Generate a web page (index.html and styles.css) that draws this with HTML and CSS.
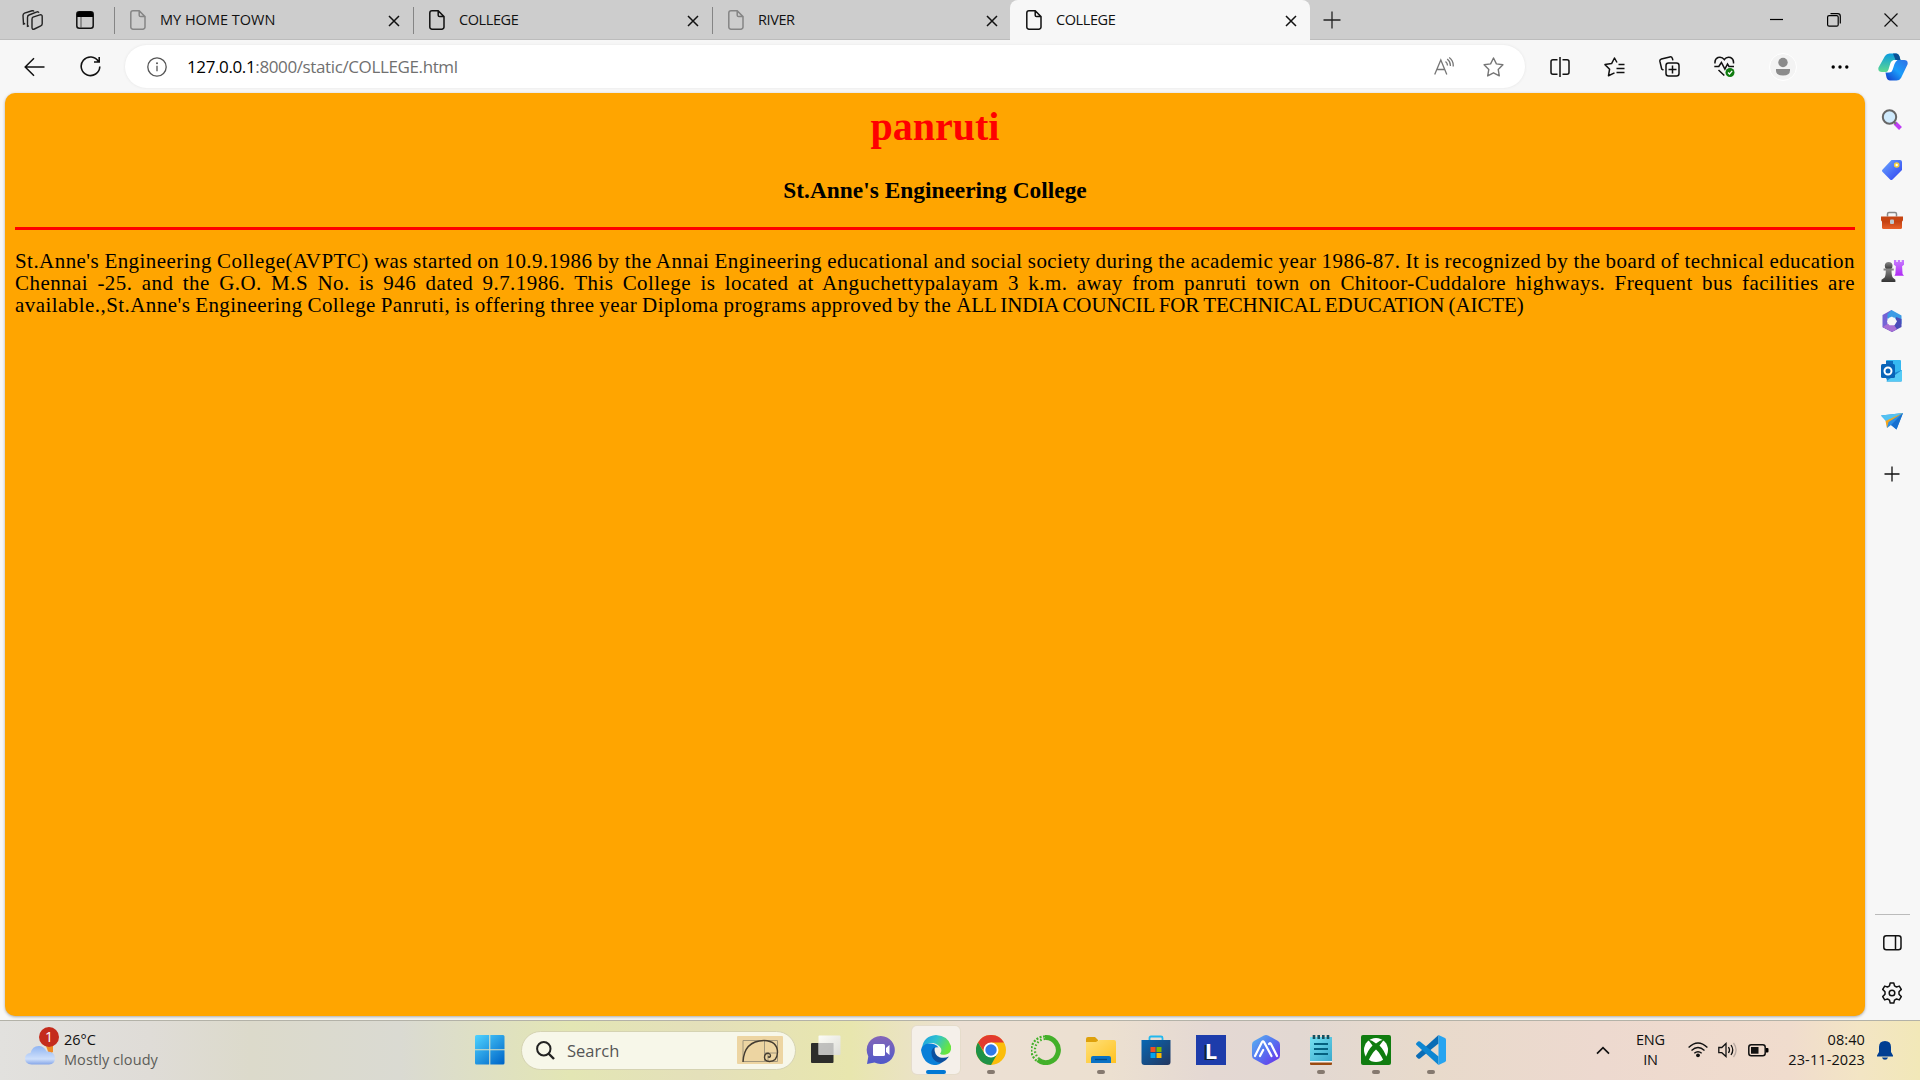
FILE: index.html
```html
<!DOCTYPE html>
<html lang="en">
<head>
<meta charset="utf-8">
<title>COLLEGE</title>
<link rel="stylesheet" href="styles.css">
</head>
<body>
<svg class="defs" width="0" height="0" aria-hidden="true">
  <defs>
    <symbol id="file" viewBox="0 0 16 20"><path d="M3 .8h6.2L15 6.6V17a2.2 2.2 0 0 1-2.2 2.2H3A2.2 2.2 0 0 1 .8 17V3A2.2 2.2 0 0 1 3 .8zM9.2 1v4.2a1.4 1.4 0 0 0 1.4 1.4H15" fill="none" stroke="currentColor" stroke-width="1.5"/></symbol>
    <symbol id="x" viewBox="0 0 12 12"><path d="M1 1l10 10M11 1L1 11" fill="none" stroke="currentColor" stroke-width="1.5"/></symbol>
    <linearGradient id="gWin" gradientUnits="userSpaceOnUse" x1="0" y1="0" x2="26" y2="30"><stop offset="0" stop-color="#4fd3ff"/><stop offset="1" stop-color="#0067c9"/></linearGradient>
    <linearGradient id="gCop1" x1="0" y1="0" x2="0" y2="1"><stop offset="0" stop-color="#0a9be0"/><stop offset="1" stop-color="#5fd98f"/></linearGradient>
    <linearGradient id="gCop2" x1="1" y1="0" x2="0" y2="1"><stop offset="0" stop-color="#2f6fe4"/><stop offset=".5" stop-color="#1a9dfa"/><stop offset="1" stop-color="#1238c8"/></linearGradient>
    <linearGradient id="gTag" x1="0" y1="0" x2="1" y2="1"><stop offset="0" stop-color="#6aa8ff"/><stop offset="1" stop-color="#2f3ff0"/></linearGradient>
    <linearGradient id="gPurple" x1="0" y1="0" x2="0" y2="1"><stop offset="0" stop-color="#c77dff"/><stop offset="1" stop-color="#b02af5"/></linearGradient>
    <linearGradient id="gPawn" x1="0" y1="0" x2="0" y2="1"><stop offset="0" stop-color="#8a8a8a"/><stop offset="1" stop-color="#333"/></linearGradient>
    <linearGradient id="gBox" x1="0" y1="0" x2="0" y2="1"><stop offset="0" stop-color="#b8380c"/><stop offset="1" stop-color="#e8622a"/></linearGradient>
    <linearGradient id="gCloud" x1="0" y1="0" x2="0" y2="1"><stop offset="0" stop-color="#8fb4f2"/><stop offset=".7" stop-color="#cfe0fb"/><stop offset="1" stop-color="#86a6e8"/></linearGradient>
    <linearGradient id="gChat" x1="0" y1="0" x2="0" y2="1"><stop offset="0" stop-color="#8466b8"/><stop offset="1" stop-color="#5059c9"/></linearGradient>
    <linearGradient id="gEdge" x1="0" y1="0" x2="1" y2=".4"><stop offset="0" stop-color="#1b9de2"/><stop offset=".5" stop-color="#2fc1d0"/><stop offset="1" stop-color="#67e540"/></linearGradient>
    <linearGradient id="gStore" x1="0" y1="0" x2="1" y2="1"><stop offset="0" stop-color="#0768b4"/><stop offset="1" stop-color="#24365f"/></linearGradient>
    <linearGradient id="gHex" x1="0" y1="0" x2="1" y2="1"><stop offset="0" stop-color="#58b6f0"/><stop offset=".5" stop-color="#5672f0"/><stop offset="1" stop-color="#6c2be8"/></linearGradient>
    <linearGradient id="gFold" x1="0" y1="0" x2="1" y2="1"><stop offset="0" stop-color="#ffe07a"/><stop offset="1" stop-color="#ffc220"/></linearGradient>
    <linearGradient id="gNote" x1="0" y1="0" x2="1" y2="1"><stop offset="0" stop-color="#76e1f2"/><stop offset="1" stop-color="#3aa9cc"/></linearGradient>
    <linearGradient id="gSq" x1="0" y1="0" x2="1" y2="1"><stop offset="0" stop-color="#fff"/><stop offset="1" stop-color="#dcdcdc"/></linearGradient>
  </defs>
</svg>

<header class="titlebar">
  <div class="slot workspaces"><svg width="21" height="20" viewBox="0 0 21 20" fill="none" stroke="#222" stroke-width="1.4"><path d="M11 7.2l6.8-2.3q2.4-.6 2.4 1.6v7.3q0 1.5-1.4 2l-6.4 3.2q-2.4 1-2.4-1.4V9.2q0-1.5 1-2zM7 15.8l-1.5.5V7.5Q5.5 5.5 7 5l8-3.2M3.2 13.5L1.5 14 1 5.5Q1 3.8 2.5 3.2L10 .8q1.5-.3 2 .7M15 1.8q1.4-.4 1.9 1"/></svg></div>
  <div class="slot tabactions"><svg width="18" height="18" viewBox="0 0 18 18"><rect x=".8" y=".8" width="16.4" height="16.4" rx="2.5" fill="none" stroke="#111" stroke-width="1.5"/><path d="M1 6V3q0-2.300 2.300-2.300h11.400Q17 .7 17 3v3z" fill="#000"/><path d="M5 6v11" stroke="#555"/></svg></div>
  <div class="tab faded"><svg class="doc"><use href="#file"/></svg><span class="label wide">MY HOME TOWN</span><svg class="close"><use href="#x"/></svg></div>
  <div class="tab"><svg class="doc"><use href="#file"/></svg><span class="label">COLLEGE</span><svg class="close"><use href="#x"/></svg></div>
  <div class="tab faded"><svg class="doc"><use href="#file"/></svg><span class="label">RIVER</span><svg class="close"><use href="#x"/></svg></div>
  <div class="tab active"><svg class="doc"><use href="#file"/></svg><span class="label">COLLEGE</span><svg class="close"><use href="#x"/></svg></div>
  <div class="slot newtab"><svg width="18" height="18" viewBox="0 0 18 18"><path d="M9 .5v17M.5 9h17" stroke="#222" stroke-width="1.3"/></svg></div>
  <div class="winbuttons">
    <svg width="14" height="14" viewBox="0 0 14 14"><path d="M0 6.500h13" stroke="#000" stroke-width="1.2"/></svg>
    <svg width="14" height="14" viewBox="0 0 14 14" fill="none" stroke="#000" stroke-width="1.2"><rect x=".6" y="2.6" width="10.6" height="10.6" rx="1.5"/><path d="M3.5.6h7.200q2.600 0 2.600 2.600v7.200"/></svg>
    <svg width="14" height="14" viewBox="0 0 14 14"><path d="M.5.5l13 13M13.5.5l-13 13" stroke="#111" stroke-width="1.2"/></svg>
  </div>
</header>

<nav class="toolbar">
  <div class="slot back"><svg width="21" height="20" viewBox="0 0 21 20"><path d="M10 1.200L1.200 10l8.800 8.800M1.200 10H20.500" fill="none" stroke="#111" stroke-width="1.5"/></svg></div>
  <div class="slot reload"><svg width="21" height="21" viewBox="0 0 21 21"><path d="M18.500 5.500A9.300 9.300 0 1 0 19.800 10.500M19.200 1v5h-5.200" fill="none" stroke="#111" stroke-width="1.6"/></svg></div>
  <div class="address">
    <svg width="20" height="20" viewBox="0 0 20 20"><circle cx="10" cy="10" r="9.2" fill="none" stroke="#555" stroke-width="1.3"/><path d="M10 8.800v5.400" stroke="#555" stroke-width="1.3"/><circle cx="10" cy="6.2" r="1" fill="#555"/></svg>
    <span class="url"><b>127.0.0.1</b>:8000/static/COLLEGE.html</span>
    <svg class="aloud" width="20" height="19" viewBox="0 0 20 19" fill="none" stroke="#767676" stroke-width="1.3"><path d="M.7 17.500L6.800 3l6 14.500M2.700 12.500h8.200M11.500 4.500q2 1.600 2 4M13.200 2q3.400 2.600 3.200 7M15.200.6Q19.700 4 19.200 9.500"/></svg>
    <svg width="21" height="20" viewBox="0 0 21 20"><path d="M10.500 1l2.900 5.900 6.500.9-4.700 4.600 1.100 6.500-5.800-3.100-5.800 3.100 1.100-6.500L1.100 7.800l6.500-.9z" fill="none" stroke="#767676" stroke-width="1.4" stroke-linejoin="round"/></svg>
  </div>
  <div class="tools">
    <div class="slot tool"><svg width="20" height="20" viewBox="0 0 20 20" fill="none" stroke="#111" stroke-width="1.5"><path d="M7.500 2.700H3Q1 2.700 1 4.700v10.600q0 2 2 2h4.500M12.500 2.700H17q2 0 2 2v10.600q0 2-2 2h-4.500M10 0v20"/></svg></div>
    <div class="slot tool"><svg width="21" height="20" viewBox="0 0 21 20" fill="none" stroke="#111" stroke-width="1.5" stroke-linejoin="round"><path d="M13 5.500L10.500 1 7.600 6.600 1 7.600l4.600 4.600-1.100 6.500L10.500 15.900M14.500 7.500H20.500M12.500 11.500h8M12.500 15.500h8"/></svg></div>
    <div class="slot tool"><svg width="21" height="21" viewBox="0 0 21 21" fill="none" stroke="#111" stroke-width="1.5"><rect x="7" y="7" width="13" height="13" rx="2.5"/><path d="M13.500 9.500v8M9.500 13.500h8M4.500 14.200L2.700 13 .9 5.400Q.5 3.500 2.400 3L10.800.9q2-.3 2.600 1.500l.5 2"/></svg></div>
    <div class="slot tool"><svg width="21" height="21" viewBox="0 0 21 21" fill="none" stroke="#111" stroke-width="1.5"><path d="M1 7.500Q.5 3 4 1.500 8 .3 10.300 3.600 12.500.3 16.500 1.500 20 3 19.500 7.500M.3 10.500h4.500l2.600-4 3.500 6.700L13.500 8l1.500 2.500h5M4.500 14l5.800 5.500"/><circle cx="16" cy="16.5" r="4.5" fill="#107c10" stroke="none"/><path d="M14 16.500l1.500 1.500 2.700-3.200" stroke="#fff" stroke-width="1.2"/></svg></div>
  </div>
  <div class="slot profile"><svg width="28" height="28" viewBox="0 0 28 28"><circle cx="14" cy="14" r="13.5" fill="#f3f3f3" stroke="#fff"/><circle cx="14" cy="9.5" r="4.7" fill="#8b8b8b"/><path d="M7 16h14v1.500q0 5-7 5t-7-5z" fill="#8b8b8b"/></svg></div>
  <div class="slot more"><svg width="18" height="4" viewBox="0 0 18 4"><circle cx="2.2" cy="2" r="1.7"/><circle cx="9" cy="2" r="1.7"/><circle cx="15.8" cy="2" r="1.7"/></svg></div>
  <div class="slot copilot"><svg width="30" height="28" viewBox="0 0 30 28"><path d="M7 3Q8.500.5 11.500.5H18q2.500 0 3.500 3l1 3.500h-5q-3 0-4 3l-2 6q-1 3-4 3H4q-4.500 0-3.500-4.500z" fill="url(#gCop1)"/><path d="M15 .5h3q2.500 0 3.500 3l1 3.500h-5z" fill="#0a4f94"/><path d="M23 25q-1.500 2.500-4.500 2.500H12q-2.500 0-3.500-3l-1-5q3.500 0 4.500-3l2.500-7q1-2.500 4-2.500H26q4.500 0 3.500 4.500z" fill="url(#gCop2)"/><path d="M12.300 10.500q1-3.500 4.700-3.500h2.500q-2 1.500-3 4l-2 6q-.7 2.500-3.500 2.500H7.500q2.500-.5 3-3z" fill="#fff"/></svg></div>
</nav>

<main class="workarea">
  <article class="page">
    <h1>panruti</h1>
    <h3>St.Anne's Engineering College</h3>
    <hr>
    <p>
      <span class="line full">St.Anne's Engineering College(AVPTC) was started on 10.9.1986 by the Annai Engineering educational and social society during the academic year 1986-87. It is recognized by the board of technical education</span>
      <span class="line full">Chennai -25. and the G.O. M.S No. is 946 dated 9.7.1986. This College is located at Anguchettypalayam 3 k.m. away from panruti town on Chitoor-Cuddalore highways. Frequent bus facilities are</span>
      <span class="line">available.,St.Anne's Engineering College Panruti, is offering three year Diploma programs approved by the <span class="caps">ALL INDIA COUNCIL FOR TECHNICAL EDUCATION (AICTE)</span></span>
    </p>
  </article>
  <aside class="sidebar">
    <div class="app"><svg width="22" height="22" viewBox="0 0 22 22"><path d="M14 14l5.500 5.500" stroke="#bf3df5" stroke-width="4"/><path d="M12.500 12.500l2.500 2.500" stroke="#777" stroke-width="2"/><circle cx="8.500" cy="8" r="6.700" fill="#cfeafc" stroke="#666" stroke-width="2"/></svg></div>
    <div class="app"><svg width="22" height="22" viewBox="0 0 22 22"><path d="M10.500 1h8.500q2 0 2 2v8L11.500 20.500q-1.200 1-2.400 0L1.400 12.800q-1-1 0-2z" fill="url(#gTag)"/><circle cx="15.700" cy="6" r="2" fill="#fff" stroke="#f5cf3c" stroke-width="1.6"/></svg></div>
    <div class="app"><svg width="22" height="20" viewBox="0 0 22 20"><path d="M6.500 6.500V4q0-1.500 1.500-1.500h6q1.500 0 1.500 1.500v2.500" fill="none" stroke="#888" stroke-width="1.5"/><rect x="1" y="9" width="20" height="10" rx="1.5" fill="url(#gBox)"/><path d="M0 6.500h22v3.500q0 1.500-2 1.500H2q-2 0-2-1.500z" fill="#c74512"/><rect x="9" y="9.500" width="4" height="4.500" rx="1" fill="#bdc9cf"/></svg></div>
    <div class="app"><svg width="23" height="24" viewBox="0 0 24 24"><path d="M13.500.5h2.500v2h1.500v-2h2.500v2h1.500v-2H24v5l-2 1.500.5 8 1.500 2H14l1-2 .5-8-2-1.500z" fill="url(#gPurple)"/><circle cx="8" cy="6.500" r="4" fill="url(#gPawn)"/><path d="M2.700 9.500h10.600v2H11q0 6 1.500 7.500l2.500 2v2.500H.5V21L3.500 19Q5 17.500 5 11.500H2.700z" fill="url(#gPawn)"/></svg></div>
    <div class="app"><svg width="22" height="22" viewBox="0 0 22 22"><path d="M10.500 0L1.500 5v12l5 2.500V8l7-4z" fill="#7563d5"/><path d="M10.500 0L20.500 5.500V14L15 11 11 6.500 6.500 9V4z" fill="#3b9be5"/><path d="M20.500 9v8L11 22 1.500 17l5-1 8.500-4V7z" fill="#4a4bb8"/><path d="M1.500 17L11 22l5-2.700-3-4.300-6.500-1z" fill="#a86fd4"/><path d="M8.500 7.500h5l2.500 3.800-2.500 4h-5L6 11.500z" fill="#f7f7f7"/></svg></div>
    <div class="app"><svg width="22" height="22" viewBox="0 0 22 22"><rect x="5" y="0" width="15" height="19" rx="1" fill="#35b8f1"/><path d="M5 1h7v6H5z" fill="#0f6cbd"/><path d="M21 10v10q0 1.500-1.500 1.500H6L5 16z" fill="#1a86d0"/><path d="M5 21.500L21 10v10.500q0 1-1 1z" fill="#54cbf6"/><rect x="0" y="4" width="14" height="14" rx="1.5" fill="#0864b8"/><circle cx="7" cy="11" r="3.500" fill="none" stroke="#fff" stroke-width="2"/></svg></div>
    <div class="app"><svg width="22" height="18" viewBox="0 0 22 18"><path d="M0 3.500L22 1 15.500 17.500 10 13 6 16 5.500 9.500z" fill="#2c8fe4"/><path d="M0 3.500L22 1 5.500 9.500z" fill="#53c2f2"/><path d="M22 1L7.500 10 6 16 4.500 9z" fill="#f4a51c"/><path d="M10 13L22 1 15.500 17.500z" fill="#1670d0"/></svg></div>
    <div class="app add"><svg width="16" height="16" viewBox="0 0 16 16"><path d="M8 .5v15M.5 8h15" stroke="#111" stroke-width="1.3"/></svg></div>
    <div class="tail">
      <div class="app"><svg width="19" height="16" viewBox="0 0 19 16" fill="none" stroke="#111" stroke-width="1.5"><rect x=".8" y=".8" width="17.2" height="14" rx="2.5"/><path d="M12.500 1v14"/></svg></div>
      <div class="app"><svg width="22" height="22" viewBox="0 0 22 22" fill="none" stroke="#111" stroke-width="1.5" stroke-linejoin="round"><circle cx="11" cy="11" r="2.8"/><path d="M9.200 1h3.600l.7 2.900 2 1.100 2.800-.9 2 3.300L18 9.700v2.600l2.300 2.300-2 3.300-2.800-.9-2 1.100-.7 2.900H9.200l-.7-2.900-2-1.100-2.800.9-2-3.300L4 12.300V9.700L1.700 7.400l2-3.300 2.800.9 2-1.100z"/></svg></div>
    </div>
  </aside>
</main>

<footer class="taskbar">
  <div class="weather">
    <div class="cloud"><svg width="32" height="32" viewBox="0 0 32 32"><path d="M22 12h7v6l-4 2z" fill="#f08a24"/><path d="M7.500 30.500Q1 30 1 24.500 1 19.500 6.500 19 8.500 11.500 15.500 12q5 .5 7 5.500 8-.5 8.500 6.500 0 6-6 6.500z" fill="url(#gCloud)"/></svg><span class="count">1</span></div>
    <div class="forecast"><span>26°C</span><span class="cond">Mostly cloudy</span></div>
  </div>
  <div class="apps">
    <div class="task start"><svg width="30" height="30" viewBox="0 0 30 30"><path d="M1.500 0H14.200v14.200H0V1.500Q0 0 1.500 0zM15.300 0H28q1.500 0 1.500 1.500v12.700H15.300zM0 15.300h14.200V29.500H1.500Q0 29.500 0 28zM15.300 15.300h14.200V28q0 1.500-1.500 1.500H15.300z" fill="url(#gWin)"/></svg></div>
    <div class="search">
      <svg width="19" height="19" viewBox="0 0 19 19" fill="none" stroke="#222" stroke-width="2"><circle cx="7.800" cy="7.800" r="6.700"/><path d="M12.500 12.500l5.500 5.500" stroke-width="2.4"/></svg>
      <span class="hint">Search</span>
      <svg width="46" height="28" viewBox="0 0 46 28" fill="none"><rect width="46" height="28" rx="1" fill="#edd5a2"/><path d="M6 4.500h34.500V25.500H6zM27.500 4.500v21M27.500 17h13M31 17v8" stroke="#a2977c"/><path d="M6 26Q7 5 27 4.500 40.500 5 40.500 16.500 40 25.500 32.500 25.500 27.500 25 27.500 21.500 27.500 17 31.500 17.300 34 18 33.300 20.500 32.300 22 31 20.500" stroke="#443c31" stroke-width="1.4"/></svg>
    </div>
    <div class="task"><svg width="30" height="30" viewBox="0 0 30 30"><rect x="0" y="8" width="22.500" height="20" rx="1" fill="#2d2d2b"/><rect x="7.500" y=".5" width="22" height="19.500" rx="1" fill="url(#gSq)" opacity=".9"/><path d="M7.500 8h15v12h-15z" fill="#b5b5b3" opacity=".75"/></svg></div>
    <div class="task"><svg width="30" height="30" viewBox="0 0 30 30"><path d="M15 1a14 14 0 1 1-6.500 26.500L1 29l1.300-7.500A14 14 0 0 1 15 1z" fill="url(#gChat)"/><rect x="7" y="9" width="12" height="12" rx="1.5" fill="#fff"/><path d="M20 13l3.500-3v10L20 17z" fill="#fff"/></svg></div>
    <div class="task current"><svg width="30" height="30" viewBox="0 0 30 30"><path d="M1 13Q2.500 1 15 0q12 .5 15 11 1 7-5 8.500-5 1-6-1 2-2 1-5Q17.500 9 12 8 5 8 1 13z" fill="url(#gEdge)"/><path d="M0 15Q1 9 8 8.500q7 0 9.500 4-5-1-5.500 5 .5 7.500 9 10Q17 30.500 13 30 2 28.500 0 15z" fill="#0a7fd8"/><path d="M13.500 12Q9 15 11 21.500 14 28.500 21 27.500q4-1.500 7-6-4 2-9 1-6-2-5.500-10.500z" fill="#0c4f9e"/></svg><i class="mark"></i></div>
    <div class="task"><svg width="30" height="30" viewBox="0 0 30 30"><circle cx="15" cy="15" r="15" fill="#fbbd0a"/><path d="M2 7.500A15 15 0 0 1 28 7.500H15L9 18z" fill="#e23a2e"/><path d="M2 7.500A15 15 0 0 0 15 30L21.500 18.500H8.500z" fill="#1f9247"/><circle cx="15" cy="15" r="7.500" fill="#fff"/><circle cx="15" cy="15" r="5.700" fill="#3079e8"/></svg><i class="mark"></i></div>
    <div class="task"><svg width="30" height="30" viewBox="0 0 30 30" fill="none" stroke="#43b02a"><path d="M14 2.600A12.500 12.500 0 1 1 7 24.800" stroke-width="5"/><path d="M14 1.500A13.500 13.500 0 0 0 6 26" stroke-width="2.2" stroke-dasharray="2 1.5"/><path d="M14 4A11 11 0 0 0 8 23.500" stroke-width="2.2" stroke-dasharray="1.5 2"/></svg></div>
    <div class="task"><svg width="30" height="30" viewBox="0 0 30 30"><path d="M0 4q0-2 2-2h7l3 3v4H0z" fill="#dea10b"/><path d="M0 7h10l3-2h15q2 0 2 2v21H0z" fill="url(#gFold)"/><path d="M5 28v-5q0-2 2-2h16q2 0 2 2v5z" fill="#0b72c4"/><path d="M9 24.500h12" stroke="#064a87" stroke-width="1.3"/></svg><i class="mark"></i></div>
    <div class="task"><svg width="30" height="30" viewBox="0 0 30 30"><path d="M8.500 6V3q0-1.500 1.500-1.500h10q1.500 0 1.500 1.500v3" fill="none" stroke="#22b8ee" stroke-width="1.8"/><path d="M.5 5h29v22q0 3-3 3H3.500q-3 0-3-3z" fill="url(#gStore)"/><path d="M9.500 12h5v5h-5z" fill="#f25022"/><path d="M15.500 12h5v5h-5z" fill="#7fba00"/><path d="M9.500 18h5v5h-5z" fill="#00a4ef"/><path d="M15.500 18h5v5h-5z" fill="#ffb900"/></svg></div>
    <div class="task"><span class="ell">L</span></div>
    <div class="task"><svg width="30" height="30" viewBox="0 0 30 30"><path d="M12.500.7q2.500-1.300 5 0L27 6q2 1.200 2 3.500v11q0 2.300-2 3.500l-9.500 5.300q-2.500 1.300-5 0L3 24q-2-1.200-2-3.500v-11Q1 7.200 3 6z" fill="url(#gHex)"/><path d="M4 21l7-14q1-1.500 2 0l7.500 14M9 21l3.200-6M18 9q1-2 2 0l6 12" fill="none" stroke="#fff" stroke-width="2.2" stroke-linecap="round"/></svg></div>
    <div class="task"><svg width="22" height="30" viewBox="0 0 22 30"><rect y="26" width="22" height="4" rx="1" fill="#9a4a10"/><path d="M0 2h22v24H0z" fill="url(#gNote)"/><path d="M0 26h22v1.500H0z" fill="#f5f5f5"/><path d="M4 9h14M4 14h14M4 19h14" stroke="#04607f" stroke-width="1.8"/><path d="M4 0v4M8.700 0v4M13.300 0v4M18 0v4" stroke="#15505f" stroke-width="2.6"/></svg><i class="mark"></i></div>
    <div class="task"><svg width="30" height="30" viewBox="0 0 30 30"><rect width="30" height="30" rx="2" fill="#107c10"/><circle cx="15" cy="15" r="12" fill="#fff"/><path d="M7 4.500Q11 5 15 8.500 19 5 23 4.500L18.500 10.500Q24 16 25.500 23L22.500 25.500Q19 18 15 14.500 11 18 7.500 25.500L4.500 23Q6 16 11.500 10.500z" fill="#107c10"/></svg><i class="mark"></i></div>
    <div class="task"><svg width="30" height="30" viewBox="0 0 30 30"><path d="M22.500 0v8.500L4 23.500q-1 .7-2 0L.5 22q-1-1 0-2z" fill="#0a6cb5"/><path d="M22.500 30v-8.500L4 6.500q-1-.7-2 0L.5 8q-1 1 0 2z" fill="#0d86d2"/><path d="M22.500 0L29 3q1 .6 1 1.800v20.400q0 1.200-1 1.800l-6.500 3z" fill="#27a4f0"/></svg><i class="mark"></i></div>
  </div>
  <div class="tray">
    <svg width="14" height="9" viewBox="0 0 14 9"><path d="M1 7.700l6-6 6 6" fill="none" stroke="#111" stroke-width="1.7"/></svg>
    <div class="lang"><span>ENG</span><span>IN</span></div>
    <svg width="20" height="16" viewBox="0 0 20 16" fill="none" stroke="#111" stroke-width="1.4"><path d="M.6 5.500q9.400-9 18.800 0M3.500 8.500q6.500-6 13 0M6.300 11.300q3.700-3.300 7.400 0"/><circle cx="10" cy="13.300" r="1.900" fill="#111" stroke="none"/></svg>
    <svg class="sound" width="20" height="16" viewBox="0 0 20 16" fill="none" stroke="#111" stroke-width="1.3"><path d="M.8 5.500h3L8 1.500v13L3.800 10.700h-3z"/><path d="M10.500 5q2 3 0 6M13 3q3.500 5 0 10"/><path d="M15.500 1q5.200 7 0 14" stroke="#b9aaa3"/></svg>
    <svg width="21" height="13" viewBox="0 0 21 13"><rect x=".8" y=".8" width="16.4" height="11" rx="2.5" fill="none" stroke="#111" stroke-width="1.5"/><rect x="3" y="3" width="7.5" height="6.7" fill="#111"/><path d="M18 4h1.500q1 0 1 1v2.600q0 1-1 1H18z"/></svg>
    <div class="clock"><span>08:40</span><span>23-11-2023</span></div>
    <svg class="bell" width="16" height="19" viewBox="0 0 16 19" fill="#003e92"><path d="M8 0q6 0 6 6v5l2 3.500v1H0v-1L2 11V6q0-6 6-6zM5 16.500h6q-.7 2.200-3 2.200t-3-2.200z"/></svg>
  </div>
</footer>
</body>
</html>
```
FILE: styles.css
```css
* { box-sizing: border-box; }
html, body { margin: 0; height: 1080px; overflow: hidden; }
body { display: flex; flex-direction: column; width: 1920px; background: #f7f7f7; font-family: "Open Sans", "Noto Sans", sans-serif; color: #111; }
svg { display: block; flex: none; }
.defs { position: absolute; }
.slot { display: flex; align-items: center; justify-content: center; flex: none; }

/* Tab strip */
.titlebar { display: flex; height: 40px; background: #cdcdcd; box-shadow: inset 0 -1px #bcbcbc; flex: none; }
.workspaces { width: 53px; margin-left: 6px; }
.tabactions { width: 52px; margin-right: 3px; }
.tab { display: flex; align-items: center; width: 299px; padding: 0 13px 0 15px; border-left: 1px solid transparent; border-image: linear-gradient(transparent 8px, #858585 8px, #858585 33px, transparent 33px) 1; flex: none; }
.doc { width: 16px; height: 20px; color: #111; }
.faded .doc { color: #858585; }
.label { flex: 1; margin-left: 14px; font-size: 14.5px; letter-spacing: -0.4px; line-height: 20px; }
.label.wide { letter-spacing: 0; }
.close { width: 12px; height: 12px; margin-top: 1px; }
.tab.active { width: 300px; margin-left: -1px; padding-left: 16px; border: 0; background: #f7f7f7; border-radius: 8px 8px 0 0; }
.newtab { width: 44px; }
.winbuttons { display: flex; justify-content: space-between; align-items: center; width: 128px; margin: 0 22px 0 auto; }

/* Address row */
.toolbar { display: flex; align-items: center; height: 53px; background: #f7f7f7; flex: none; }
.back { width: 35px; margin-left: 17px; }
.reload { width: 55px; margin: 0 7px 0 11px; }
.address { display: flex; align-items: center; width: 1400px; height: 43px; padding: 0 21px 0 22px; border-radius: 22px; background: #fff; box-shadow: 0 0 3px #e4e4e4; flex: none; }
.url { flex: 1; margin-left: 20px; font-size: 17px; letter-spacing: -0.38px; color: #707070; white-space: nowrap; }
.url b { font-weight: 400; color: #000; }
.aloud { margin-right: 29px; }
.tools { display: flex; margin-left: 7px; }
.tool { width: 55px; }
.profile { width: 62px; }
.more { width: 52px; }
.copilot { width: 54px; }

/* Page and sidebar */
.workarea { display: flex; height: 927px; padding: 0 0 4px 5px; flex: none; }
.page { width: 1860px; padding: 11px 10px; background: #ffa500; border-radius: 10px; box-shadow: 0 1px 3px #aaa; font-family: "Liberation Serif", serif; color: #000; }
.page h1 { margin: 0; color: red; font-size: 40px; line-height: 46px; text-align: center; }
.page h3 { margin: 27px 0 0; font-size: 23.4px; line-height: 27px; text-align: center; }
.page hr { height: 3px; margin: 23px 0 20px; border: 0; background: red; }
.page p { margin: 0; font-size: 21px; letter-spacing: 0.44px; word-spacing: -0.85px; }
.line { display: block; height: 22.2px; line-height: 22.2px; white-space: nowrap; }
.line.full { text-align-last: justify; }
.caps { letter-spacing: -0.09px; }

.sidebar { display: flex; flex-direction: column; align-items: center; width: 55px; padding: 2px 1px 0 0; }
.app { display: flex; align-items: center; justify-content: center; height: 50.2px; flex: none; }
.app.add { height: 56px; }
.tail { width: 35px; height: 102px; margin-top: auto; padding-top: 3px; border-top: 1px solid #bbb; }

/* Taskbar */
.taskbar { display: flex; align-items: center; height: 60px; border-top: 1px solid #b3b2a8; flex: none;
  background: linear-gradient(90deg, #e2e1de 0, #dfdcd7 150px, #dcdacb 250px, #dadad2 400px, #e3e6b4 570px, #e4e0ba 700px, #e8e6ae 850px, #ece0d4 960px, #ece0d0 1110px, #e4d8d3 1210px, #e2d8d2 1300px, #e8dacb 1430px, #edd9cf 1600px, #f0dccd 1790px, #f3e5c4 1860px, #f2e8b8 1920px); }
.weather { display: flex; width: 475px; padding-left: 24px; }
.cloud { position: relative; width: 32px; height: 42px; padding-top: 4px; }
.count { position: absolute; left: 15px; top: -3px; width: 20px; height: 20px; border-radius: 50%; background: #c42b1c; color: #fff; font-size: 14px; line-height: 20px; text-align: center; }
.forecast { display: flex; flex-direction: column; margin-left: 8px; font-size: 14.5px; line-height: 20px; }
.cond { color: #5c5c58; letter-spacing: 0.08px; }
.apps { display: flex; align-items: center; height: 59px; padding-bottom: 1px; }
.task { position: relative; display: flex; align-items: center; justify-content: center; width: 48px; height: 48px; margin-right: 7px; border-radius: 5px; }
.task.start { width: 30px; margin-right: 16px; }
.search { display: flex; align-items: center; width: 275px; height: 39px; margin-right: 6px; padding: 0 12px 0 14px; border-radius: 20px; background: #f7f7e9; border: 1px solid #d5d3b2; }
.hint { flex: 1; margin-left: 12px; font-size: 16.5px; color: #555; }
.task.current { background: #f5f0ea; box-shadow: 0 0 0 1px #e5dccb; }
.mark { position: absolute; left: 20px; bottom: 0; width: 8px; height: 4px; border-radius: 2px; background: #85796f; }
.current .mark { left: 14px; width: 20px; background: #0078d4; }
.ell { width: 30px; height: 30px; background: #1d3cab; color: #fff; font: bold 22px/30px "Open Sans", sans-serif; text-align: center; text-shadow: -2px 1px #112233; }
.tray { display: flex; align-items: center; margin-left: auto; padding: 0 27px 1px 0; font-size: 14.5px; line-height: 20px; }
.tray span { display: block; }
.lang { width: 36px; margin: 0 20px 0 22px; text-align: center; letter-spacing: -0.3px; }
.sound { margin: 0 10px; }
.clock { margin-left: 19px; text-align: right; letter-spacing: 0.1px; }
.bell { margin-left: 12px; }
```
